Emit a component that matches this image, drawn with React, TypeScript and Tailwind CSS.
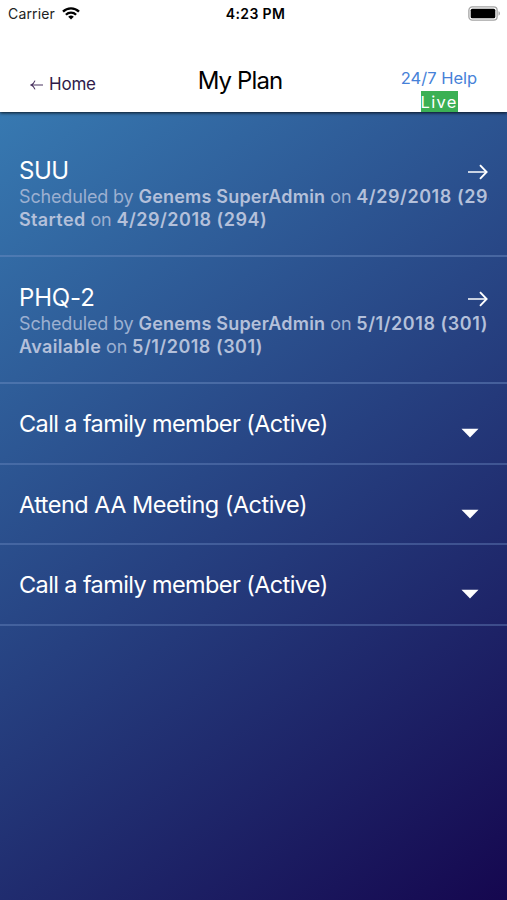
import React, { useState } from "react";

interface Assessment {
  title: string;
  scheduled: string;
  status: string;
  date: string;
  titleClass: string;
}

interface Activity {
  title: string;
  titleClass: string;
}

const assessments: Assessment[] = [
  {
    title: "SUU",
    scheduled: "4/29/2018 (294)",
    status: "Started",
    date: "4/29/2018 (294)",
    titleClass: "tracking-[-0.5px]",
  },
  {
    title: "PHQ-2",
    scheduled: "5/1/2018 (301)",
    status: "Available",
    date: "5/1/2018 (301)",
    titleClass: "tracking-[-0.15px]",
  },
];

const activities: Activity[] = [
  { title: "Call a family member (Active)", titleClass: "tracking-[-0.61px]" },
  { title: "Attend AA Meeting (Active)", titleClass: "tracking-[-0.52px]" },
  { title: "Call a family member (Active)", titleClass: "tracking-[-0.61px]" },
];

const WifiIcon = () => (
  <svg width="18" height="13" viewBox="0 0 18 13" fill="none" stroke="#000" strokeWidth="2.3" aria-hidden="true">
    <path d="M1 4.6a11.3 11.3 0 0 1 16 0" />
    <path d="M3.9 7.7a7.2 7.2 0 0 1 10.2 0" />
    <path d="M9 12.6 6.2 9.8a4 4 0 0 1 5.6 0Z" fill="#000" stroke="none" />
  </svg>
);

const BatteryIcon = () => (
  <svg width="33" height="15" viewBox="0 0 33 15" aria-hidden="true">
    <rect x="0.9" y="0.9" width="28.2" height="13.2" rx="3.4" fill="#fff" stroke="#a3a3a3" strokeWidth="1.3" />
    <rect x="2.7" y="2.7" width="24.6" height="9.6" rx="1.6" fill="#000" />
    <path d="M30.6 5.3c1.5.5 1.5 3.9 0 4.4Z" fill="#8a8a8a" />
  </svg>
);

const BackArrow = () => (
  <svg width="14" height="12" viewBox="0 0 14 12" fill="none" stroke="#4a3460" strokeWidth="1.1" aria-hidden="true">
    <path d="M13 6H1M5 1.6Q3.8 4.8 1 6q2.8 1.2 4 4.4" />
  </svg>
);

const ForwardArrow = () => (
  <svg width="20" height="16" viewBox="0 0 20 16" fill="none" stroke="#fff" aria-hidden="true">
    <path d="M0 8h18.5" strokeWidth="1.5" />
    <path d="M12 1.2 18.6 8 12 14.8" strokeWidth="1.9" />
  </svg>
);

const App = () => {
  const [active, setActive] = useState<number | null>(null);

  return (
    <div className="flex h-[900px] w-[507px] flex-col overflow-hidden bg-white font-['Inter',sans-serif]">
      <header className="z-10 h-[112px] shrink-0 bg-white shadow-[0_1px_3px_rgba(0,0,0,0.8)]">
        <div className="grid h-[27px] grid-cols-3 items-center text-black">
          <div className="flex items-center gap-[7px] pl-2">
            <span className="text-[14px] tracking-[0.15px] text-[#222]">Carrier</span>
            <WifiIcon />
          </div>
          <span className="pl-[4px] text-center text-[14px] font-semibold tracking-[0.35px]">4:23 PM</span>
          <div className="flex justify-end pr-[6px]">
            <BatteryIcon />
          </div>
        </div>
        <nav className="grid h-[85px] grid-cols-[170px_140px_1fr] pt-[38px]">
          <a className="flex h-10 items-center gap-[5px] pl-[30px] text-[17px] tracking-[-0.2px] text-[#2e1a4a]">
            <BackArrow />
            Home
          </a>
          <h1 className="flex h-8 items-center justify-center text-[24px] tracking-[-0.9px] text-black">
            My Plan
          </h1>
          <div className="flex flex-col items-center pl-[61px]">
            <a className="h-[26px] whitespace-nowrap text-[16.5px] leading-[26px] text-[#4681d8]">24/7 Help</a>
            <span className="h-[21px] w-[37px] bg-[#3bb054] text-[16.5px] leading-[23px] tracking-[1.3px] text-white">
              Live
            </span>
          </div>
        </nav>
      </header>

      <main className="flex-1 bg-linear-[143deg] from-[#3779b1] to-[#15074f] pt-[18px] text-white">
        {assessments.map((item) => (
          <section key={item.title} className="h-[127px] border-b-2 border-[#6f8dc4]/45 pl-[19px] pr-[18px] pt-[25px]">
            <div className="flex h-8 items-center justify-between">
              <h2 className={`text-[24px] ${item.titleClass}`}>{item.title}</h2>
              <button type="button" aria-label={item.title} className="pr-px pt-px">
                <ForwardArrow />
              </button>
            </div>
            <div className="-mt-0.5 text-[18px] leading-[23px] tracking-[-0.15px] text-[#9cb0d1]">
              <p className="overflow-hidden whitespace-nowrap">
                Scheduled by{" "}
                <b className="font-semibold tracking-[0.2px] text-[#b4c0da]">Genems SuperAdmin</b> on{" "}
                <b className="font-semibold tracking-[0.55px] text-[#b4c0da]">{item.scheduled}</b>
              </p>
              <p className="whitespace-nowrap">
                <b className="font-semibold tracking-[0.35px] text-[#b4c0da]">{item.status}</b> on{" "}
                <b className="font-semibold tracking-[0.5px] text-[#b4c0da]">{item.date}</b>
              </p>
            </div>
          </section>
        ))}

        {activities.map((item, index) => (
          <section
            key={index}
            className="flex h-[80.6px] justify-between border-b-2 border-[#6f8dc4]/40 pl-[19px] pr-[28px] pt-[23px]"
          >
            <h2 className={`h-8 whitespace-nowrap text-[23.5px] leading-[33px] ${item.titleClass}`}>{item.title}</h2>
            <button
              type="button"
              aria-label={item.title}
              aria-expanded={active === index}
              onClick={() => setActive(active === index ? null : index)}
              className="mt-[21px] h-[10px]"
            >
              <svg width="18" height="10" viewBox="0 0 18 10" fill="#fff" aria-hidden="true">
                <path d="M0.5 0.7h17L9 9.4Z" />
              </svg>
            </button>
          </section>
        ))}
      </main>
    </div>
  );
};

export default App;
